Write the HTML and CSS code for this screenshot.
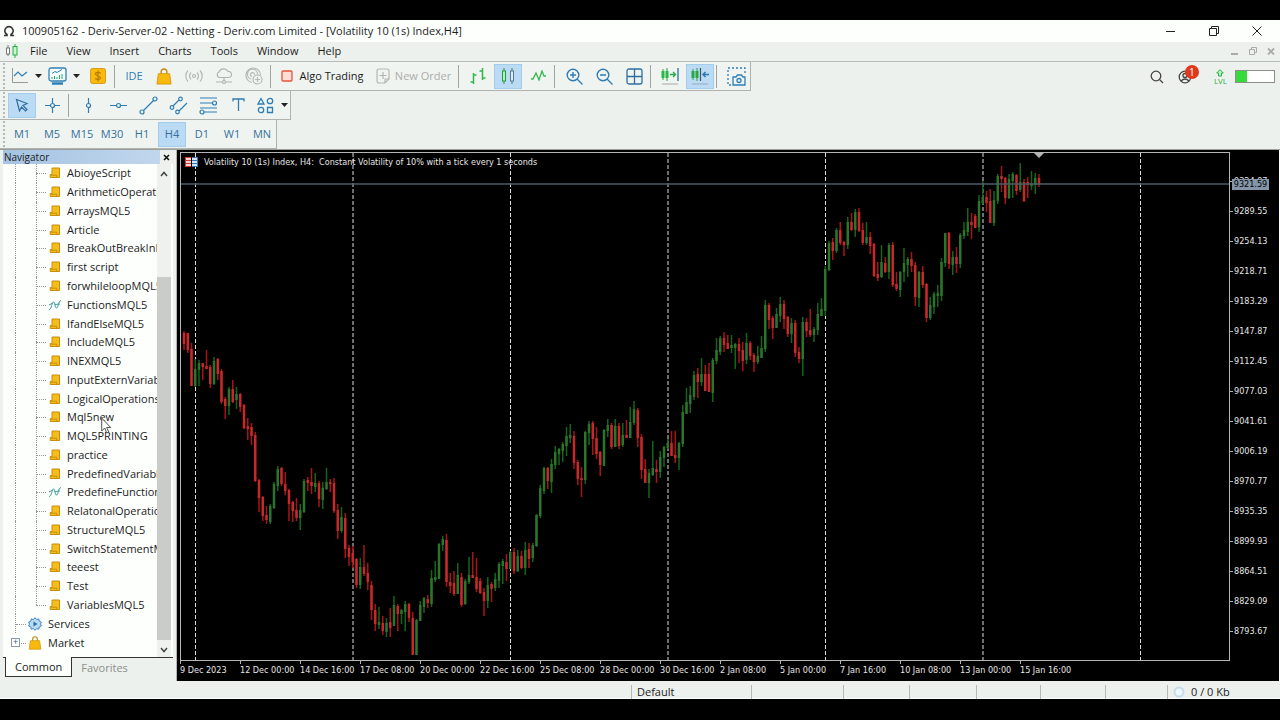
FILE: index.html
```
<!DOCTYPE html>
<html lang="en">
<head>
  <meta charset="utf-8">
  <title>100905162 - Deriv-Server-02 - Netting</title>
  <link rel="stylesheet" href="styles.css">
</head>
<body>
  <!-- shared icons -->
  <svg class="sprite" width="0" height="0">
    <symbol id="i-script" viewBox="0 0 12 12">
      <path d="M3 1h7.500v9.500H1.200V7.500H3z" fill="#f5bd1b" stroke="#c98d0c"/>
      <path d="M1.500 8.200h6.300v2.300" fill="none" stroke="#c98d0c"/>
    </symbol>
    <symbol id="i-func" viewBox="0 0 12 12">
      <path d="M0 10.500C3 10.500 2.500 3 4.500 3s1 6 3 6 1.500-7 4.500-7.500M0 6l4-2M6 5.500l5-.5" fill="none" stroke="#3f9b9b"/>
    </symbol>
    <symbol id="i-bag" viewBox="0 0 16 18">
      <path d="M5 7V4a3 3 0 0 1 6 0v3" fill="none" stroke="#c58a10" stroke-width="1.500"/>
      <path d="M2 6h12l1.500 11H.5z" fill="#f7b90d" stroke="#d69a10"/>
    </symbol>
    <symbol id="i-caret" viewBox="0 0 7 4"><path d="M0 0h7L3.500 4z" fill="#222"/></symbol>
  </svg>

  <div class="window">
    <header class="title-bar">
      <svg class="app-icon" width="12" height="12" viewBox="0 0 12 12"><path d="M1 10.500h3v-1a4.200 4.200 0 1 1 4 0v1h3" fill="none" stroke="#333" stroke-width="1.600"/></svg>
      <h1>100905162 - Deriv-Server-02 - Netting - Deriv.com Limited - [Volatility 10 (1s) Index,H4]</h1>
      <div class="window-buttons">
        <button aria-label="Minimize"><svg width="12" height="12" viewBox="0 0 12 12"><path d="M1 6.500h9" stroke="#222" fill="none"/></svg></button>
        <button aria-label="Restore"><svg width="12" height="12" viewBox="0 0 12 12"><path d="M1.500 3.500h7v7h-7zM3.500 3.500v-2h7v7h-2" stroke="#222" fill="none"/></svg></button>
        <button aria-label="Close"><svg width="12" height="12" viewBox="0 0 12 12"><path d="M1.500 1.500l9 9M10.500 1.500l-9 9" stroke="#222" fill="none"/></svg></button>
      </div>
    </header>

    <nav class="menu-bar">
      <svg class="menu-icon" width="14" height="14" viewBox="0 0 14 14"><path d="M3 1v3M3 10v2" stroke="#777"/><rect x="1.500" y="4" width="3" height="6" fill="#fff" stroke="#777"/><path d="M10 0v2M10 11v3" stroke="#22b045"/><rect x="8" y="2.500" width="4" height="8.500" fill="#c9f7cf" stroke="#22b045"/></svg>
      <button>File</button>
      <button>View</button>
      <button>Insert</button>
      <button>Charts</button>
      <button>Tools</button>
      <button>Window</button>
      <button>Help</button>
      <div class="child-buttons">
        <svg width="8" height="8" viewBox="0 0 8 8"><path d="M0 7h7" stroke="#aaa" stroke-width="2"/></svg>
        <svg width="8" height="8" viewBox="0 0 8 8"><path d="M.5 2.500h5v5h-5zM2.500 2.500v-2h5v5h-2" fill="none" stroke="#aaa"/></svg>
        <svg width="8" height="8" viewBox="0 0 8 8"><path d="M1 1.500l6 6M7 1.500l-6 6" stroke="#aaa" stroke-width="1.800"/></svg>
      </div>
    </nav>

    <div class="toolbar-row">
      <div class="toolbar">
        <button class="tool wide" aria-label="New chart">
          <svg width="18" height="16" viewBox="0 0 18 16" fill="none"><path d="M1.500 0v14.500H17" stroke="#999"/><path d="M3 8l4-4 4 4 5-4" stroke="#2e7db5" stroke-width="1.200"/></svg>
          <svg width="7" height="4"><use href="#i-caret"/></svg>
        </button>
        <button class="tool wide" aria-label="Profiles">
          <svg width="19" height="18" viewBox="0 0 19 18" fill="none"><rect x="1" y="1" width="17" height="13" rx="2" fill="#f5ffff" stroke="#3180b8" stroke-width="1.300"/><path d="M4 6.500l3-2 2 1 5-3" stroke="#2e7db5"/><path d="M4 12v-2M6.500 12V9M9 12v-2M11.500 12V8M14 12V7" stroke="#27ad5a"/><path d="M4 16.500h11" stroke="#3180b8" stroke-width="2.500"/></svg>
          <svg width="7" height="4"><use href="#i-caret"/></svg>
        </button>
        <button class="tool" aria-label="Market watch"><svg width="16" height="16" viewBox="0 0 16 16"><rect x=".5" y=".5" width="15" height="15" rx="2" fill="#f9bb0b" stroke="#d79a1a"/><path d="M10.500 5.500C10 4 5.500 4 5.500 6s5 1.700 5 3.800-4.700 2-5.200.4M8 2.500v11" fill="none" stroke="#b97a08" stroke-width="1.200"/></svg></button>
        <span class="sep"></span>
        <button class="tool ide">IDE</button>
        <button class="tool" aria-label="Market"><svg width="16" height="17"><use href="#i-bag"/></svg></button>
        <button class="tool" aria-label="Signals"><svg width="18" height="14" viewBox="0 0 18 14" fill="none" stroke="#b4b9b6" stroke-width="1.200"><circle cx="9" cy="7" r="1.500"/><path d="M6 3.500a5 5 0 0 0 0 7M12 3.500a5 5 0 0 1 0 7M3 1.500a8 8 0 0 0 0 11M15 1.500a8 8 0 0 1 0 11"/></svg></button>
        <button class="tool" aria-label="Virtual hosting"><svg width="18" height="16" viewBox="0 0 18 16" fill="none" stroke="#b0b5b2" stroke-width="1.200"><path d="M4 9.500a3 3 0 0 1 0-5.500 5 5 0 0 1 9-.5 3 3 0 0 1 1 6zM9 9.500V13M1 14h6M11 14h6"/><circle cx="9" cy="14" r="1.500"/></svg></button>
        <button class="tool" aria-label="Copy trading"><svg width="18" height="18" viewBox="0 0 18 18" fill="none" stroke="#b4b9b6" stroke-width="1.200"><path d="M7 15.500A7.300 7.300 0 1 1 15.500 8M6 12a5 5 0 1 1 6.500-4.500M7 9.500a2 2 0 1 1 2.500-2"/><circle cx="12.500" cy="12.500" r="4.500"/><path d="M12.500 10v5M10 12.500h5"/></svg></button>
        <span class="sep"></span>
        <button class="tool algo"><svg width="12" height="12" viewBox="0 0 12 12"><rect x="1" y="1" width="10" height="10" rx="1" fill="#ffdcd4" stroke="#e5533c" stroke-width="1.300"/></svg>Algo Trading</button>
        <button class="tool order" disabled><svg width="14" height="16" viewBox="0 0 14 16" fill="none" stroke="#b3b8b5" stroke-width="1.200"><path d="M3 1h8q2 0 2 2v8l-4 4H3q-2 0-2-2V3q0-2 2-2zM9 15v-4h4M7 4v7M3.500 7.500h7"/></svg>New Order</button>
        <span class="sep"></span>
        <button class="tool" aria-label="Bar chart"><svg width="18" height="16" viewBox="0 0 18 16" fill="none" stroke="#2db84a" stroke-width="1.500"><path d="M4.500 5v11M4.500 7h3M1.500 14h3M13.500 0v12M10.500 3h3M13.500 10h3"/></svg></button>
        <button class="tool active" aria-label="Candlesticks"><svg width="16" height="16" viewBox="0 0 16 16"><path d="M4 0v16M12 0v16" stroke="#3d8b62"/><rect x="2.500" y="3" width="3" height="10" fill="#aef5b2" stroke="#249b42"/><rect x="10.500" y="3" width="3" height="10" fill="#d9edfa" stroke="#567c8f"/></svg></button>
        <button class="tool" aria-label="Line chart"><svg width="17" height="12" viewBox="0 0 17 12" fill="none" stroke="#35b653" stroke-width="1.300"><path d="M1 9h2l3-6 3 7 3-9 2 5h2"/></svg></button>
        <span class="sep"></span>
        <button class="tool" aria-label="Zoom in"><svg width="17" height="17" viewBox="0 0 17 17" fill="none" stroke="#2e7db5" stroke-width="1.400"><circle cx="7" cy="7" r="5.800"/><path d="M11 11l5.500 5.500M7 4v6M4 7h6"/></svg></button>
        <button class="tool" aria-label="Zoom out"><svg width="17" height="17" viewBox="0 0 17 17" fill="none" stroke="#2e7db5" stroke-width="1.400"><circle cx="7" cy="7" r="5.800"/><path d="M11 11l5.500 5.500M4 7h6"/></svg></button>
        <button class="tool" aria-label="Tile windows"><svg width="17" height="17" viewBox="0 0 17 17" fill="none" stroke="#2e6fa0" stroke-width="1.300"><rect x="1" y="1" width="15" height="15" rx="2"/><path d="M8.500 1v15M1 8.500h15"/></svg></button>
        <span class="sep"></span>
        <button class="tool" aria-label="Auto scroll"><svg width="20" height="18" viewBox="0 0 20 18" fill="none"><path d="M3 2v11M7 1v13" stroke="#27a845"/><path d="M3 4v7M7 4v7" stroke="#27b845" stroke-width="3"/><path d="M10 7.500h5M13 5l2.500 2.500L13 10" stroke="#27a845" stroke-width="1.300"/><path d="M18 1v13" stroke="#2e6fa0" stroke-width="1.300"/><path d="M2 17h16" stroke="#aaa"/></svg></button>
        <button class="tool active" aria-label="Chart shift"><svg width="20" height="18" viewBox="0 0 20 18" fill="none"><path d="M3 2v11M7 1v13" stroke="#27a845"/><path d="M3 4v7M7 4v7" stroke="#27a845" stroke-width="3"/><path d="M10.500 1v13" stroke="#456" stroke-width="1.200"/><path d="M13 7.500h6M15.500 5L13 7.500l2.500 2.500" stroke="#2878b5" stroke-width="1.500"/><path d="M2 17h16" stroke="#9ab"/></svg></button>
        <span class="sep"></span>
        <button class="tool" aria-label="Screenshot"><svg width="19" height="19" viewBox="0 0 19 19" fill="none" stroke="#2e7db5" stroke-width="1.300"><path d="M4 18H1V1h17v6" stroke-dasharray="2 2"/><path d="M7 10h2l1.500-2h4L16 10h2v8H6v-8z"/><circle cx="12" cy="13.500" r="2"/></svg></button>
      </div>
      <div class="account-tools">
        <button class="plain" aria-label="Search"><svg width="14" height="14" viewBox="0 0 14 14" fill="none" stroke="#444" stroke-width="1.300"><circle cx="6" cy="6" r="4.800"/><path d="M9.500 9.500l3.500 3.500"/></svg></button>
        <button class="plain account" aria-label="Account"><svg width="14" height="14" viewBox="0 0 14 14" fill="none" stroke="#444" stroke-width="1.300"><circle cx="7" cy="7" r="5.800"/><circle cx="7" cy="5.500" r="2"/><path d="M3 11q4-4 8 0"/></svg><span class="badge">1</span></button>
        <span class="level"><svg width="8" height="8" viewBox="0 0 8 8"><path d="M4 .7L7.300 4H5.500v3h-3V4H.7z" fill="#bcf0c3" stroke="#2eae48"/></svg>LVL</span>
        <span class="meter"></span>
      </div>
    </div>

    <div class="toolbar-row">
      <div class="toolbar drawing">
        <button class="tool active" aria-label="Cursor"><svg width="14" height="14" viewBox="0 0 14 14" fill="none" stroke="#2e6fa0" stroke-width="1.200"><path d="M1.500 1.500l10.500 4-4 2 4 4-1.500 1.500-4-4-2 4z"/></svg></button>
        <button class="tool" aria-label="Crosshair"><svg width="17" height="17" viewBox="0 0 17 17" fill="none" stroke="#2e7db5" stroke-width="1.200"><path d="M8.500 1v5M8.500 11v5M1 8.500h5M11 8.500h5"/><circle cx="8.500" cy="8.500" r="2"/></svg></button>
        <span class="sep"></span>
        <button class="tool" aria-label="Vertical line"><svg width="17" height="17" viewBox="0 0 17 17" fill="none" stroke="#2e7db5" stroke-width="1.200"><path d="M8.500 1v5.500M8.500 10.500V16"/><circle cx="8.500" cy="8.500" r="2"/></svg></button>
        <button class="tool" aria-label="Horizontal line"><svg width="17" height="17" viewBox="0 0 17 17" fill="none" stroke="#2e7db5" stroke-width="1.200"><path d="M0 8.500h6.500M10.500 8.500H17"/><circle cx="8.500" cy="8.500" r="2"/></svg></button>
        <button class="tool" aria-label="Trendline"><svg width="19" height="19" viewBox="0 0 19 19" fill="none" stroke="#2e7db5" stroke-width="1.200"><path d="M4.500 14.500l10-10"/><circle cx="3" cy="16" r="2"/><circle cx="16" cy="3" r="2"/></svg></button>
        <button class="tool" aria-label="Equidistant channel"><svg width="19" height="19" viewBox="0 0 19 19" fill="none" stroke="#2e7db5" stroke-width="1.200"><path d="M4 10l6-6M10 15l8-8"/><circle cx="3" cy="11.500" r="1.800"/><circle cx="11.500" cy="3" r="1.800"/><circle cx="8.500" cy="16" r="1.800"/></svg></button>
        <button class="tool" aria-label="Fibonacci"><svg width="19" height="19" viewBox="0 0 19 19" fill="none" stroke="#2e7db5" stroke-width="1.200"><path d="M1 2h17M1 7h12M1 12h17M5 16h13"/><circle cx="15.500" cy="7" r="2"/><circle cx="3" cy="16" r="2"/></svg></button>
        <button class="tool" aria-label="Text"><svg width="13" height="14" viewBox="0 0 13 14" fill="none" stroke="#2e7db5" stroke-width="1.300"><path d="M1 3.500V1h11v2.500M6.500 1v12"/></svg></button>
        <button class="tool wide" aria-label="Objects"><svg width="18" height="17" viewBox="0 0 18 17" fill="none" stroke="#2e7db5" stroke-width="1.300"><path d="M4 1.500L7 7H1zM10.500 10.500h5v5h-5z"/><circle cx="13" cy="4" r="2.700"/><circle cx="4" cy="13" r="2.700"/></svg>
          <svg width="7" height="4"><use href="#i-caret"/></svg></button>
      </div>
    </div>

    <div class="toolbar-row">
      <div class="toolbar timeframes">
        <button class="tool">M1</button>
        <button class="tool">M5</button>
        <button class="tool">M15</button>
        <button class="tool">M30</button>
        <button class="tool">H1</button>
        <button class="tool active">H4</button>
        <button class="tool">D1</button>
        <button class="tool">W1</button>
        <button class="tool">MN</button>
      </div>
    </div>

    <main class="workspace">
      <aside class="navigator">
        <div class="nav-header"><h2>Navigator</h2><button aria-label="Close navigator"><svg width="7" height="7" viewBox="0 0 7 7"><path d="M1 1l5 5M6 1L1 6" stroke="#111" stroke-width="1.600"/></svg></button></div>
        <div class="nav-body">
          <ul class="tree">
            <li><svg><use href="#i-script"/></svg>AbioyeScript</li>
            <li><svg><use href="#i-script"/></svg>ArithmeticOperati</li>
            <li><svg><use href="#i-script"/></svg>ArraysMQL5</li>
            <li><svg><use href="#i-script"/></svg>Article</li>
            <li><svg><use href="#i-script"/></svg>BreakOutBreakInE.</li>
            <li><svg><use href="#i-script"/></svg>first script</li>
            <li><svg><use href="#i-script"/></svg>forwhileloopMQL5</li>
            <li><svg><use href="#i-func"/></svg>FunctionsMQL5</li>
            <li><svg><use href="#i-script"/></svg>IfandElseMQL5</li>
            <li><svg><use href="#i-script"/></svg>IncludeMQL5</li>
            <li><svg><use href="#i-script"/></svg>INEXMQL5</li>
            <li><svg><use href="#i-script"/></svg>InputExternVariab</li>
            <li><svg><use href="#i-script"/></svg>LogicalOperations</li>
            <li><svg><use href="#i-script"/></svg>Mql5new</li>
            <li><svg><use href="#i-script"/></svg>MQL5PRINTING</li>
            <li><svg><use href="#i-script"/></svg>practice</li>
            <li><svg><use href="#i-script"/></svg>PredefinedVariable</li>
            <li><svg><use href="#i-func"/></svg>PredefineFunction</li>
            <li><svg><use href="#i-script"/></svg>RelatonalOperatio</li>
            <li><svg><use href="#i-script"/></svg>StructureMQL5</li>
            <li><svg><use href="#i-script"/></svg>SwitchStatementM</li>
            <li><svg><use href="#i-script"/></svg>teeest</li>
            <li><svg><use href="#i-script"/></svg>Test</li>
            <li class="last"><svg><use href="#i-script"/></svg>VariablesMQL5</li>
            <li class="root"><svg class="big" viewBox="0 0 14 14"><path d="M7 .7l1.500 1.800 2.300-.6.400 2.300 2.200.9L12.500 7l.9 2-2.200.900-.4 2.300-2.300-.6L7 13.300l-1.500-1.700-2.300.6-.4-2.300L.6 9l.9-2-.9-1.900 2.200-.9.400-2.300 2.300.6z" fill="#b9dcf5" stroke="#3d87c0"/><path d="M5.500 4.500L9.500 7l-4 2.500z" fill="#2a6ca3"/></svg>Services</li>
            <li class="root end"><span class="expander">+</span><svg class="big"><use href="#i-bag"/></svg>Market</li>
          </ul>
          <div class="scrollbar">
            <button aria-label="Scroll up"><svg width="8" height="6" viewBox="0 0 8 6"><path d="M1 5l3-3.500L7 5" fill="none" stroke="#444" stroke-width="1.500"/></svg></button>
            <div class="track"><div class="thumb"></div></div>
            <button aria-label="Scroll down"><svg width="8" height="6" viewBox="0 0 8 6"><path d="M1 1l3 3.500L7 1" fill="none" stroke="#444" stroke-width="1.500"/></svg></button>
          </div>
        </div>
        <div class="tabs">
          <button class="current">Common</button>
          <button>Favorites</button>
        </div>
      </aside>

      <section class="chart">
        <div class="plot">
          <svg id="candles" class="candles"></svg>
          <div class="chart-title">
            <svg width="13" height="10" viewBox="0 0 13 10"><rect width="6" height="10" fill="#f6d5d2"/><rect x="7" width="6" height="10" fill="#d3e6f8"/><path d="M0 .5h6M0 3.500h6M0 6.500h6M0 9.500h6M.5 0v10" stroke="#d8372e"/><path d="M7 .5h6M7 3.500h6M7 6.500h6M7 9.500h6M12.500 0v10" stroke="#3677b5"/></svg>
            <span>Volatility 10 (1s) Index, H4:&nbsp; Constant Volatility of 10% with a tick every 1 seconds</span>
          </div>
        </div>
        <div class="price-axis">
          <span>9324.97</span><span>9289.55</span><span>9254.13</span><span>9218.71</span><span>9183.29</span><span>9147.87</span><span>9112.45</span><span>9077.03</span><span>9041.61</span><span>9006.19</span><span>8970.77</span><span>8935.35</span><span>8899.93</span><span>8864.51</span><span>8829.09</span><span>8793.67</span>
          <b class="last-price">9321.59</b>
        </div>
        <div class="time-axis">
          <span>9 Dec 2023</span><span>12 Dec 00:00</span><span>14 Dec 16:00</span><span>17 Dec 08:00</span><span>20 Dec 00:00</span><span>22 Dec 16:00</span><span>25 Dec 08:00</span><span>28 Dec 00:00</span><span>30 Dec 16:00</span><span>2 Jan 08:00</span><span>5 Jan 00:00</span><span>7 Jan 16:00</span><span>10 Jan 08:00</span><span>13 Jan 00:00</span><span>15 Jan 16:00</span>
        </div>
      </section>
    </main>

    <footer class="status-bar">
      <span></span><span>Default</span><span></span><span></span><span></span><span></span><span></span><span></span>
      <span><svg width="12" height="12" viewBox="0 0 12 12"><circle cx="6" cy="6" r="4.500" fill="#eef7fd" stroke="#c5dcec" stroke-width="2"/></svg>0 / 0 Kb</span>
    </footer>
  </div>

  <svg class="pointer" width="12" height="18" viewBox="0 0 12 18"><path d="M.7 1v13l3-3 2 5 2-1-2-4.500h4z" fill="#fff" fill-opacity=".8" stroke="#555"/></svg>

  <script src="chart.js"></script>
</body>
</html>
```
FILE: styles.css
```
* {
  box-sizing: border-box;
}

body {
  margin: 0;
  height: 100vh;
  padding: 20px 0 21px;
  background: #000;
  color: #1c1c1c;
  font-family: "Open Sans", "Noto Sans", sans-serif;
  font-size: 11px;
  line-height: 14px;
  overflow: hidden;
}

button {
  margin: 0;
  padding: 0;
  border: 0;
  background: none;
  color: inherit;
  font: inherit;
}

h1, h2 {
  margin: 0;
  font-size: 11px;
  font-weight: 400;
}

.sprite {
  position: absolute;
}

.window {
  height: 100%;
  display: flex;
  flex-direction: column;
  background: #edf1ed;
}

/* Title and menu */
.title-bar {
  display: flex;
  align-items: center;
  height: 22px;
  padding-left: 3px;
  background: #fdfffd;
}

.title-bar h1 {
  flex: 1;
  margin-left: 7px;
}

.window-buttons {
  display: flex;
  padding-right: 2px;
}

.window-buttons button {
  width: 43px;
  height: 20px;
  display: grid;
  place-items: center;
}

.menu-bar {
  display: flex;
  align-items: center;
  gap: 19px;
  height: 20px;
  padding: 0 5px 1px;
  border-bottom: 1px solid #b9bebb;
}

.menu-icon {
  margin-right: -8px;
}

.child-buttons {
  display: flex;
  gap: 10px;
  margin-left: auto;
}

/* Toolbars */
.toolbar-row {
  display: flex;
  align-items: stretch;
  justify-content: space-between;
  height: 29px;
}

.toolbar {
  display: flex;
  align-items: center;
  gap: 2px;
  padding-left: 8px;
  border-right: 1px solid #aeb3b0;
  border-bottom: 1px solid #aeb3b0;
  background: radial-gradient(circle, #b5bab7 1px, transparent 1px) 2px 0 / 4px 4px repeat-y, #f0f4f0;
}

.toolbar.drawing,
.toolbar.timeframes {
  color: #35719c;
}

.tool {
  display: flex;
  align-items: center;
  justify-content: center;
  width: 28px;
  height: 25px;
  border: 1px solid transparent;
  white-space: nowrap;
}

.tool.wide {
  width: 36px;
  gap: 6px;
}

.tool.active {
  background: #bbdaf3;
  border-color: #a3cdec;
}

.tool.ide {
  color: #2e7db5;
}

.tool.algo {
  width: 93px;
  gap: 6px;
}

.tool.order {
  width: 85px;
  gap: 5px;
  color: #a9aeab;
}

.sep {
  width: 2px;
  height: 23px;
  margin-right: 2px;
  border-left: 1px solid #a0a5a2;
}

.account-tools {
  display: flex;
  align-items: center;
  padding-right: 5px;
}

.plain {
  display: grid;
  position: relative;
}

.account {
  margin-left: 14px;
}

.badge {
  position: absolute;
  left: 7px;
  top: -5px;
  width: 14px;
  height: 14px;
  border-radius: 7px;
  background: #e03a1e;
  color: #fff;
  font-size: 10px;
}

.level {
  display: flex;
  flex-direction: column;
  align-items: center;
  margin: 0 8px 0 22px;
  color: #2eae48;
  font-size: 8px;
  line-height: 8px;
}

.meter {
  width: 40px;
  height: 13px;
  border: 1px solid #8b908d;
  background: linear-gradient(90deg, #38d93a 30%, #fff 30%);
}

/* Navigator */
.workspace {
  flex: 1;
  display: flex;
  min-height: 0;
  border-top: 1px solid #9a9f9c;
}

.navigator {
  display: flex;
  flex-direction: column;
  width: 177px;
  padding: 0 3px 4px;
  border-right: 1px solid #b0b5b2;
}

.nav-header {
  display: flex;
  align-items: center;
  height: 14px;
  background: linear-gradient(90deg, #a5c3e2, #c3d8ee);
}

.nav-header h2 {
  flex: 1;
  margin-left: 1px;
  font-size: 10px;
}

.nav-header button {
  width: 13px;
  height: 14px;
  background: #edf1ed;
}

.nav-body {
  flex: 1;
  display: flex;
  min-height: 0;
  background: #fdfffd;
}

.tree {
  flex: 1;
  display: flex;
  flex-direction: column;
  min-width: 0;
  margin: 0;
  padding: 0 0 5px 12px;
  list-style: none;
  overflow: hidden;
}

.tree li {
  flex: 1;
  display: flex;
  align-items: center;
  position: relative;
  min-height: 0;
  padding-left: 33px;
  border-left: 1px dotted #999;
  white-space: nowrap;
}

.tree li svg {
  flex: none;
  width: 12px;
  height: 12px;
  margin-right: 6px;
}

/* branch lines beside each item */
.tree li::before {
  content: "";
  position: absolute;
  left: 20px;
  top: 0;
  height: 100%;
  border-left: 1px dotted #999;
}

.tree li.last::before {
  height: 50%;
}

.tree li::after {
  content: "";
  position: absolute;
  left: 20px;
  top: 50%;
  width: 10px;
  border-top: 1px dotted #999;
}

.tree li.root {
  padding-left: 12px;
}

.tree li.root::before {
  display: none;
}

.tree li.root::after {
  left: 0;
}

.tree li.end {
  border-color: transparent;
}

.tree li svg.big {
  width: 14px;
  height: 14px;
}

.expander {
  position: absolute;
  z-index: 1;
  left: -5px;
  width: 9px;
  height: 9px;
  border: 1px solid #8a9aa8;
  background: #fff;
  color: #26569a;
  font-size: 9px;
  line-height: 6px;
  text-align: center;
}

.scrollbar {
  display: flex;
  flex-direction: column;
  width: 14px;
  margin-right: 2px;
  background: #eef1ee;
}

.scrollbar button {
  height: 17px;
}

.track {
  flex: 1;
  display: flex;
  flex-direction: column;
  justify-content: flex-end;
}

.thumb {
  height: 79%;
  background: #c9ccc9;
}

.tabs {
  display: flex;
  height: 20px;
  padding-left: 2px;
  border-top: 1px solid #333;
}

.tabs button {
  padding: 0 9px;
  color: #8b8f8c;
}

.tabs .current {
  margin-top: -1px;
  border: 1px solid #333;
  border-top: 0;
  background: #fdfffd;
  color: #1c1c1c;
}

/* Chart */
.chart {
  flex: 1;
  display: grid;
  grid-template-columns: 1fr 49px;
  grid-template-rows: 1fr 20px;
  min-width: 0;
  padding: 2px 0 0 3px;
  border-right: 1px solid #fff;
  background: #000;
  color: #e6e6e6;
  font-family: "DejaVu Sans Condensed", "Open Sans", sans-serif;
  font-size: 9px;
  line-height: 12px;
}

.plot {
  position: relative;
  border: 1px solid #b5b5b5;
}

.candles {
  display: block;
  position: absolute;
  width: 100%;
  height: 100%;
}

.chart-title {
  position: relative;
  display: flex;
  align-items: center;
  gap: 6px;
  padding: 3px 4px;
}

.price-axis {
  position: relative;
  padding-top: 14px;
}

.price-axis span {
  display: flex;
  align-items: center;
  height: 30px;
}

.price-axis span::before {
  content: "";
  width: 3px;
  margin-right: 1px;
  border-top: 1px solid #b5b5b5;
}

.last-price {
  position: absolute;
  left: 2px;
  top: 27px;
  width: 37px;
  height: 11px;
  background: #8496a8;
  color: #000;
  font-weight: 400;
  line-height: 11px;
  text-align: center;
}

.time-axis {
  grid-column: 1 / 3;
  display: flex;
}

.time-axis span {
  flex: none;
  width: 60px;
  padding-top: 3px;
  white-space: nowrap;
  background: linear-gradient(#b5b5b5, #b5b5b5) 0 0 / 1px 3px no-repeat;
}

/* Status bar */
.status-bar {
  display: grid;
  grid-template-columns: 1fr 120px 92px 66px 67px 64px 65px 62px 113px;
  height: 18px;
  padding-top: 4px;
  border-bottom: 1px solid #fff;
}

.status-bar span {
  display: flex;
  align-items: center;
  gap: 6px;
  padding-left: 5px;
  border-left: 1px solid #b5bab7;
}

.status-bar span:first-child {
  border-left: 0;
}

.pointer {
  position: absolute;
  left: 101px;
  top: 417px;
}
```
FILE: chart.js
```
// one bar per entry: colour, high, body top, body bottom, low (screen y)
const bars = `
r 331 333 343 350,r 333 333 349 353,r 343 349 385 386,g 359 369 385 387,g 360 363 369 386,r 363 363 366 380,
r 350 366 368 369,r 365 367 383 388,g 357 361 383 385,r 358 359 373 380,r 369 371 401 404,r 397 399 405 419,
g 387 389 405 415,r 380 389 401 403,g 387 394 399 409,r 393 394 406 412,r 404 405 427 429,r 418 426 428 440,
r 423 427 435 445,r 432 435 480 482,r 479 480 497 512,r 496 497 515 521,r 506 515 519 524,g 504 506 521 524,
g 482 484 507 509,g 466 469 485 491,r 467 468 483 486,r 472 484 490 495,r 489 490 503 521,r 501 502 510 522,
r 498 510 517 521,g 504 510 517 530,g 479 481 511 513,r 477 480 482 491,r 468 482 485 494,g 473 483 486 492,
r 481 483 498 507,g 482 488 499 509,g 468 482 488 490,r 479 482 483 492,r 478 483 510 513,r 504 510 530 539,
g 507 517 530 533,r 513 518 548 558,r 545 548 556 566,r 546 553 561 568,r 558 559 584 588,g 558 567 584 589,
r 545 567 573 576,r 563 573 581 590,r 581 585 609 620,r 604 610 623 631,g 607 622 624 629,r 616 623 630 635,
g 618 623 631 637,r 608 622 627 637,g 596 605 625 626,r 604 606 613 631,g 609 610 613 624,g 601 604 611 631,
r 603 604 617 622,r 612 618 654 655,g 619 620 654 655,g 601 605 620 621,g 597 598 606 613,r 595 599 602 608,
g 570 578 603 607,g 561 577 579 582,g 543 544 578 579,g 536 539 544 551,r 534 540 581 587,r 573 582 585 593,
r 571 583 593 596,g 563 575 593 594,r 573 577 604 607,g 579 581 603 605,g 557 575 581 584,r 552 575 577 578,
r 558 577 588 592,r 578 581 592 594,r 588 592 600 616,g 577 585 600 608,r 582 584 588 602,g 573 579 587 591,
g 562 564 580 588,g 559 561 565 584,r 554 562 568 581,g 551 552 568 568,r 548 552 570 574,g 550 556 570 572,
r 551 556 567 569,g 542 550 567 575,r 543 549 558 568,g 543 545 557 562,g 514 515 545 547,g 485 488 515 518,
g 467 468 490 494,r 467 468 480 489,g 459 464 481 493,g 446 452 464 469,g 448 449 453 465,g 442 444 450 462,
g 427 436 445 456,g 424 435 437 443,r 431 436 462 469,r 460 462 478 485,r 467 478 479 497,g 431 432 479 484,
g 421 424 432 445,r 421 423 438 455,r 427 438 453 459,r 451 452 464 476,g 429 430 465 466,g 419 425 430 437,
r 423 425 446 449,g 419 426 446 447,r 423 426 445 449,g 423 435 444 447,r 420 435 437 438,g 407 422 437 438,
g 401 409 422 425,r 408 410 437 447,r 434 437 469 479,r 459 469 482 483,g 469 473 482 498,g 441 468 474 476,
r 460 469 471 483,g 451 457 471 478,g 446 447 457 467,g 439 443 447 449,r 431 443 455 456,r 431 455 457 463,
g 442 443 457 470,g 405 412 443 447,g 388 402 413 413,g 386 395 403 413,g 371 375 396 400,r 368 374 381 398,
g 358 374 381 386,r 365 374 390 391,r 363 374 391 392,g 358 360 392 402,g 338 350 360 364,g 336 338 351 355,
r 332 338 344 352,r 335 343 348 349,g 335 345 347 353,g 343 344 347 369,r 338 344 350 363,r 342 350 360 371,
g 333 343 359 364,r 341 343 355 360,r 353 355 361 372,g 346 356 361 364,g 336 348 357 358,g 300 305 348 352,
r 303 305 319 329,r 316 318 327 339,g 308 314 327 328,g 297 304 315 322,r 300 304 318 329,r 316 317 333 337,
g 318 323 333 343,r 320 323 352 357,r 347 352 358 363,g 317 322 358 376,r 318 322 330 337,r 309 330 334 337,
g 327 329 334 342,g 303 314 329 335,g 298 309 315 316,g 266 269 310 316,g 241 243 269 271,r 238 242 250 260,
g 228 230 250 253,r 222 230 242 245,r 241 242 244 256,g 217 222 244 249,r 213 222 229 231,g 209 212 229 237,
r 208 212 230 232,r 223 230 242 245,g 222 237 242 245,r 232 237 245 254,r 243 244 275 277,r 262 274 277 281,
g 245 262 276 278,r 257 263 271 273,g 243 245 271 279,r 242 245 284 287,r 272 284 288 291,g 271 272 289 297,
g 248 263 271 282,g 257 259 264 277,r 252 259 265 272,r 262 265 296 306,g 271 272 297 307,r 266 272 284 288,
r 283 284 317 322,g 297 305 317 320,g 292 294 306 314,g 285 293 295 307,g 258 262 295 301,g 233 233 262 267,
r 232 233 263 269,g 251 257 264 275,r 247 257 263 273,g 233 235 263 268,g 222 230 235 239,g 208 222 231 236,
r 213 222 224 239,r 214 216 227 228,g 195 201 226 232,g 181 197 202 204,r 191 197 202 212,r 189 201 222 223,
g 191 200 222 226,g 174 176 200 204,r 166 176 178 192,r 177 178 197 204,g 174 179 197 199,g 172 174 180 198,
r 174 175 190 195,g 163 182 189 192,r 179 182 200 202,r 177 182 184 198,g 171 183 185 190,g 173 178 184 194,
r 174 178 184 187`.trim().split(",");

const step = 3.75; // 16 bars per time label
const plotTop = 153;
const wick = { r: "#a81414", g: "#14651a" };
const body = { r: "#c9282a", g: "#2b752a" };
let out = "";

// period separators, one every 42 bars
for (let i = 0; i < 7; i++) {
  const x = 14.5 + i * 157.5;
  out += `<line x1="${x}" x2="${x}" y1="0" y2="100%" stroke="#ddd" stroke-dasharray="4 2"/>`;
}

bars.forEach((bar, i) => {
  const [c, high, bodyTop, bodyBottom, low] = bar.trim().split(" ");
  const x = 3 + i * step;
  out += `<rect x="${x - 0.75}" y="${high - plotTop}" width="1.5" height="${low - high}" fill="${wick[c]}"/>`;
  out += `<rect x="${x - 1.25}" y="${bodyTop - plotTop}" width="2.5" height="${bodyBottom - bodyTop + 1}" fill="${body[c]}"/>`;
});

// last price line and shift marker
out += `<line x1="0" x2="100%" y1="31" y2="31" stroke="#4d5c66" stroke-width="1.5"/>`;
out += `<path d="M853 0h10l-5 5z" fill="#b5b5b5"/>`;

document.getElementById("candles").innerHTML = out;
```
